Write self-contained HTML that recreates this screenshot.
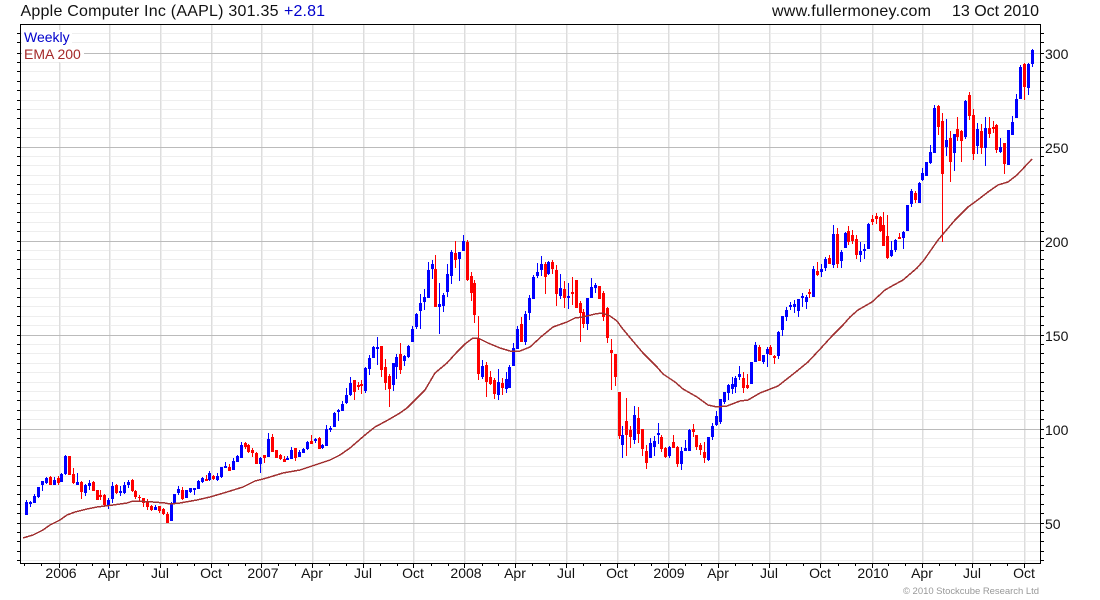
<!DOCTYPE html>
<html><head><meta charset="utf-8"><title>AAPL</title>
<style>html,body{margin:0;padding:0;background:#fff}svg{display:block}text{font-family:"Liberation Sans",Arial,sans-serif}</style></head>
<body>
<svg width="1100" height="600" viewBox="0 0 1100 600" xmlns="http://www.w3.org/2000/svg">
<rect width="1100" height="600" fill="#fff"/>
<!-- minor grid -->
<path shape-rendering="crispEdges" fill="none" stroke="#eeeeee" d="M20 33.5H1040M20 42.5H1040M20 62.5H1040M20 71.5H1040M20 81.5H1040M20 90.5H1040M20 100.5H1040M20 109.5H1040M20 118.5H1040M20 128.5H1040M20 137.5H1040M20 156.5H1040M20 165.5H1040M20 175.5H1040M20 184.5H1040M20 194.5H1040M20 203.5H1040M20 212.5H1040M20 222.5H1040M20 231.5H1040M20 250.5H1040M20 259.5H1040M20 269.5H1040M20 278.5H1040M20 288.5H1040M20 297.5H1040M20 306.5H1040M20 316.5H1040M20 325.5H1040M20 344.5H1040M20 353.5H1040M20 363.5H1040M20 372.5H1040M20 382.5H1040M20 391.5H1040M20 400.5H1040M20 410.5H1040M20 419.5H1040M20 438.5H1040M20 447.5H1040M20 457.5H1040M20 466.5H1040M20 476.5H1040M20 485.5H1040M20 494.5H1040M20 504.5H1040M20 513.5H1040M20 532.5H1040M20 541.5H1040M20 551.5H1040M20 560.5H1040"/>
<!-- vertical grid, lighter companion pixel -->
<path shape-rendering="crispEdges" fill="none" stroke="#eeeeee" d="M60.5 24V563M110.5 24V563M161.5 24V563M212.5 24V563M262.5 24V563M313.5 24V563M364.5 24V563M414.5 24V563M465.5 24V563M516.5 24V563M567.5 24V563M618.5 24V563M669.5 24V563M719.5 24V563M770.5 24V563M821.5 24V563M873.5 24V563M923.5 24V563M973.5 24V563M1025.5 24V563"/>
<!-- vertical grid -->
<path shape-rendering="crispEdges" fill="none" stroke="#dddddd" d="M59.5 24V563M109.5 24V563M160.5 24V563M211.5 24V563M261.5 24V563M312.5 24V563M363.5 24V563M413.5 24V563M464.5 24V563M515.5 24V563M566.5 24V563M617.5 24V563M668.5 24V563M718.5 24V563M769.5 24V563M820.5 24V563M872.5 24V563M922.5 24V563M972.5 24V563M1024.5 24V563"/>
<!-- major grid -->
<path shape-rendering="crispEdges" fill="none" stroke="#bbbbbb" d="M20 53.5H1040M20 147.5H1040M20 241.5H1040M20 335.5H1040M20 429.5H1040M20 523.5H1040"/>
<!-- legend backgrounds -->
<rect x="22" y="30" width="50" height="16" fill="#fff"/>
<rect x="22" y="46" width="62" height="16" fill="#fff"/>
<g shape-rendering="crispEdges" fill="none">
<!-- blue wicks -->
<path stroke="#0000ff" stroke-width="1" d="M26.5 500V515M30.5 501V507M34.5 494V503M38.5 487V498M42.5 481V491M46.5 477V484M54.5 477V485M61.5 473V482M65.5 455V475M77.5 473V485M85.5 484V496M89.5 480V490M108.5 498V509M112.5 482V503M120.5 486V496M124.5 482V494M128.5 480V488M155.5 505V510M171.5 502V521M174.5 494V503M178.5 486V495M186.5 490V498M190.5 488V493M194.5 488V495M198.5 480V489M202.5 477V483M209.5 471V481M217.5 473V481M221.5 467V478M225.5 462V468M233.5 458V470M237.5 455V462M241.5 442V458M260.5 457V473M268.5 433V457M287.5 456V460M291.5 447V459M299.5 450V457M303.5 448V453M307.5 441V450M315.5 438V443M322.5 444V449M326.5 425V446M330.5 426V432M334.5 412V427M338.5 409V421M342.5 401V411M346.5 388V404M350.5 377V396M365.5 367V393M369.5 355V375M373.5 346V358M377.5 337V365M393.5 363V391M396.5 354V379M404.5 355V366M408.5 345V358M412.5 326V342M416.5 313V329M420.5 294V329M424.5 289V310M428.5 262V298M432.5 260V279M439.5 283V334M443.5 293V312M447.5 264V297M451.5 250V284M459.5 252V281M463.5 235V251M482.5 360V379M498.5 369V400M506.5 372V393M509.5 365V388M513.5 343V366M517.5 326V349M525.5 311V345M529.5 295V320M533.5 275V299M537.5 263V278M541.5 256V276M548.5 261V275M560.5 274V299M568.5 283V309M587.5 298V330M591.5 278V298M595.5 283V293M622.5 426V458M634.5 406V444M650.5 438V458M654.5 436V456M658.5 423V444M669.5 446V458M681.5 447V470M685.5 440V451M689.5 429V451M708.5 437V461M712.5 423V440M716.5 411V426M720.5 399V424M724.5 392V404M728.5 384V400M732.5 377V394M735.5 376V393M739.5 366V380M751.5 362V384M755.5 342V362M763.5 355V364M767.5 347V367M778.5 331V359M782.5 316V336M786.5 307V321M790.5 302V310M794.5 300V313M798.5 299V317M802.5 293V307M806.5 295V309M813.5 266V297M821.5 264V277M825.5 257V271M833.5 225V268M841.5 250V268M845.5 232V248M860.5 242V262M864.5 244V259M868.5 223V249M891.5 241V257M895.5 239V252M903.5 231V249M907.5 205V231M911.5 189V207M919.5 182V203M922.5 168V181M926.5 162V176M930.5 145V164M934.5 105V153M946.5 119V156M954.5 134V171M965.5 100V139M977.5 123V154M985.5 117V166M1000.5 138V153M1008.5 130V165M1012.5 116V135M1016.5 94V118M1020.5 65V99M1028.5 63V95M1032.5 49V67"/>
<!-- red wicks -->
<path stroke="#ff0000" stroke-width="1" d="M50.5 476V485M58.5 476V485M69.5 456V475M73.5 468V484M81.5 481V499M93.5 481V491M97.5 490V500M100.5 490V500M104.5 494V506M116.5 484V494M132.5 479V492M135.5 490V499M139.5 495V501M143.5 498V507M147.5 499V510M151.5 505V511M159.5 506V513M163.5 508V515M167.5 512V523M182.5 487V500M206.5 475V481M213.5 475V480M229.5 464V471M245.5 442V449M248.5 444V453M252.5 448V457M256.5 452V464M264.5 455V463M272.5 434V452M276.5 450V458M280.5 454V460M284.5 456V462M295.5 448V461M311.5 435V444M319.5 437V449M354.5 380V400M358.5 382V390M361.5 380V394M381.5 346V377M385.5 359V390M389.5 374V407M400.5 343V374M435.5 255V307M455.5 241V268M467.5 240V281M471.5 272V301M474.5 280V323M478.5 316V380M486.5 362V397M490.5 371V385M494.5 378V399M502.5 378V395M521.5 317V342M545.5 262V294M552.5 260V274M556.5 265V306M564.5 281V308M572.5 277V305M576.5 280V308M580.5 301V342M583.5 309V328M599.5 286V299M603.5 291V321M607.5 307V343M611.5 339V390M615.5 354V386M619.5 392V439M626.5 398V456M630.5 426V448M638.5 407V443M642.5 429V456M646.5 445V469M661.5 435V452M665.5 447V458M673.5 435V448M677.5 446V467M693.5 424V437M696.5 435V450M700.5 443V455M704.5 442V463M743.5 372V393M747.5 374V389M759.5 345V361M770.5 345V355M774.5 355V364M809.5 289V298M817.5 262V276M829.5 255V264M837.5 228V268M848.5 226V245M852.5 230V244M856.5 235V259M872.5 215V225M876.5 213V224M880.5 216V232M883.5 212V246M887.5 215V259M899.5 233V239M915.5 191V203M938.5 105V135M942.5 113V242M950.5 131V182M957.5 117V141M961.5 130V162M969.5 92V120M973.5 109V160M981.5 124V154M989.5 117V138M993.5 121V133M996.5 124V153M1004.5 143V174M1024.5 63V100"/>
<!-- blue bodies -->
<path stroke="#0000ff" stroke-width="3" d="M26.5 502V515M30.5 502V504M34.5 496V503M38.5 487V497M42.5 481V485M46.5 478V483M54.5 480V485M61.5 474V482M65.5 456V474M77.5 482V485M85.5 485V493M89.5 483V486M108.5 500V505M112.5 486V499M120.5 491V493M124.5 485V493M128.5 482V485M155.5 507V510M171.5 504V521M174.5 494V503M178.5 489V493M186.5 490V498M190.5 488V492M194.5 488V490M198.5 481V489M202.5 478V482M209.5 473V480M217.5 476V480M221.5 467V477M225.5 466V468M233.5 461V470M237.5 456V462M241.5 445V458M260.5 458V464M268.5 439V457M287.5 458V460M291.5 450V459M299.5 452V457M303.5 449V453M307.5 442V449M315.5 439V441M322.5 445V448M326.5 429V446M330.5 428V430M334.5 413V427M338.5 410V412M342.5 404V411M346.5 395V403M350.5 383V395M365.5 368V391M369.5 358V369M373.5 347V358M377.5 347V349M393.5 363V385M396.5 357V367M404.5 356V361M408.5 346V357M412.5 329V342M416.5 314V327M420.5 303V311M424.5 297V302M428.5 270V298M432.5 264V269M439.5 304V307M443.5 295V306M447.5 274V292M451.5 252V276M459.5 252V259M463.5 241V251M482.5 366V377M498.5 382V395M506.5 379V389M509.5 367V388M513.5 348V366M517.5 329V349M525.5 314V342M529.5 298V313M533.5 277V299M537.5 272V276M541.5 264V270M548.5 262V274M560.5 288V296M568.5 296V298M587.5 298V324M591.5 287V298M595.5 285V288M622.5 435V445M634.5 415V440M650.5 443V458M654.5 441V447M658.5 433V435M669.5 447V456M681.5 451V464M685.5 448V451M689.5 430V451M708.5 437V460M712.5 426V437M716.5 416V425M720.5 399V422M724.5 392V402M728.5 385V393M732.5 384V389M735.5 378V387M739.5 374V377M751.5 362V384M755.5 345V362M763.5 355V362M767.5 349V354M778.5 332V356M782.5 316V330M786.5 310V317M790.5 305V307M794.5 304V307M798.5 299V311M802.5 296V298M806.5 297V302M813.5 269V297M821.5 269V272M825.5 259V268M833.5 234V265M841.5 252V261M845.5 233V248M860.5 251V255M864.5 249V251M868.5 224V249M891.5 250V256M895.5 240V250M903.5 232V238M907.5 205V231M911.5 191V204M919.5 183V203M922.5 173V180M926.5 162V176M930.5 152V163M934.5 108V153M946.5 140V147M954.5 134V153M965.5 101V137M977.5 129V146M985.5 128V148M1000.5 147V152M1008.5 130V165M1012.5 122V135M1016.5 99V118M1020.5 67V99M1028.5 64V88M1032.5 50V64"/>
<!-- red bodies -->
<path stroke="#ff0000" stroke-width="3" d="M50.5 477V485M58.5 478V483M69.5 456V475M73.5 474V483M81.5 482V492M93.5 482V491M97.5 490V500M100.5 495V497M104.5 495V505M116.5 485V493M132.5 480V491M135.5 491V497M139.5 497V498M143.5 498V503M147.5 502V507M151.5 506V510M159.5 506V511M163.5 509V514M167.5 514V523M182.5 490V499M206.5 479V481M213.5 476V479M229.5 467V471M245.5 443V447M248.5 445V452M252.5 450V453M256.5 453V464M264.5 455V458M272.5 437V452M276.5 450V458M280.5 455V459M284.5 459V462M295.5 448V458M311.5 441V444M319.5 438V449M354.5 380V392M358.5 385V387M361.5 384V386M381.5 346V370M385.5 367V383M389.5 376V389M400.5 354V370M435.5 269V307M455.5 253V260M467.5 242V280M471.5 276V293M474.5 283V315M478.5 338V374M486.5 365V382M490.5 377V384M494.5 380V394M502.5 383V388M521.5 324V342M545.5 264V277M552.5 262V269M556.5 270V294M564.5 289V298M572.5 292V294M576.5 280V308M580.5 303V313M583.5 312V324M599.5 286V299M603.5 293V317M607.5 308V338M611.5 350V353M615.5 354V377M619.5 392V436M626.5 421V435M630.5 430V437M638.5 418V434M642.5 429V449M646.5 451V463M661.5 437V449M665.5 448V457M673.5 442V448M677.5 447V464M693.5 429V432M696.5 435V447M700.5 445V450M704.5 452V458M743.5 378V388M747.5 385V388M759.5 347V361M770.5 347V355M774.5 356V358M809.5 292V294M817.5 271V275M829.5 258V264M837.5 234V264M848.5 231V242M852.5 235V241M856.5 239V255M872.5 219V222M876.5 216V219M880.5 217V231M883.5 225V246M887.5 236V258M899.5 237V239M915.5 193V200M938.5 106V127M942.5 121V174M950.5 138V162M957.5 129V137M961.5 131V141M969.5 95V116M973.5 115V154M981.5 131V148M989.5 128V134M993.5 127V129M996.5 125V150M1004.5 143V164M1024.5 64V87"/>
</g>
<!-- EMA 200 -->
<polyline fill="none" shape-rendering="crispEdges" stroke="#a03030" stroke-width="1.5" stroke-linejoin="round" points="23,538 33,535 43,530 50,525 60,520 67,515 75,512 87,509 97,507 113,505 127,503 133,501 153,502 165,503 170,504 180,503 197,500 210,497 227,492 243,487 255,481 263,479 270,477 283,473 300,470 315,465 330,460 340,455 350,448 365,435 375,427 388,420 400,413 407,408 415,400 425,390 435,373 447,363 457,352 465,344 473,338 478,338 488,343 500,348 510,351 520,351 530,347 542,336 553,327 567,322 575,318 583,317 595,314 602,313 610,316 617,321 622,328 632,340 643,353 657,367 663,374 675,382 683,389 697,397 708,405 717,407 727,406 740,401 748,400 760,393 778,386 797,371 808,362 822,347 832,336 843,325 850,317 858,310 872,302 885,290 892,286 903,280 917,268 924,260 938,240 955,220 968,207 975,202 988,192 998,185 1008,182 1017,175 1032,159"/>
<!-- frame and ticks -->
<g shape-rendering="crispEdges" fill="none" stroke="#000">
<rect x="20.5" y="24.5" width="1020" height="539"/>
<path d="M17 33.5H20M17 42.5H20M17 53.5H20M17 62.5H20M17 71.5H20M17 81.5H20M17 90.5H20M17 100.5H20M17 109.5H20M17 118.5H20M17 128.5H20M17 137.5H20M17 147.5H20M17 156.5H20M17 165.5H20M17 175.5H20M17 184.5H20M17 194.5H20M17 203.5H20M17 212.5H20M17 222.5H20M17 231.5H20M17 241.5H20M17 250.5H20M17 259.5H20M17 269.5H20M17 278.5H20M17 288.5H20M17 297.5H20M17 306.5H20M17 316.5H20M17 325.5H20M17 335.5H20M17 344.5H20M17 353.5H20M17 363.5H20M17 372.5H20M17 382.5H20M17 391.5H20M17 400.5H20M17 410.5H20M17 419.5H20M17 429.5H20M17 438.5H20M17 447.5H20M17 457.5H20M17 466.5H20M17 476.5H20M17 485.5H20M17 494.5H20M17 504.5H20M17 513.5H20M17 523.5H20M17 532.5H20M17 541.5H20M17 551.5H20M17 560.5H20"/>
<path d="M1041 33.5H1044M1041 42.5H1044M1041 53.5H1044M1041 62.5H1044M1041 71.5H1044M1041 81.5H1044M1041 90.5H1044M1041 100.5H1044M1041 109.5H1044M1041 118.5H1044M1041 128.5H1044M1041 137.5H1044M1041 147.5H1044M1041 156.5H1044M1041 165.5H1044M1041 175.5H1044M1041 184.5H1044M1041 194.5H1044M1041 203.5H1044M1041 212.5H1044M1041 222.5H1044M1041 231.5H1044M1041 241.5H1044M1041 250.5H1044M1041 259.5H1044M1041 269.5H1044M1041 278.5H1044M1041 288.5H1044M1041 297.5H1044M1041 306.5H1044M1041 316.5H1044M1041 325.5H1044M1041 335.5H1044M1041 344.5H1044M1041 353.5H1044M1041 363.5H1044M1041 372.5H1044M1041 382.5H1044M1041 391.5H1044M1041 400.5H1044M1041 410.5H1044M1041 419.5H1044M1041 429.5H1044M1041 438.5H1044M1041 447.5H1044M1041 457.5H1044M1041 466.5H1044M1041 476.5H1044M1041 485.5H1044M1041 494.5H1044M1041 504.5H1044M1041 513.5H1044M1041 523.5H1044M1041 532.5H1044M1041 541.5H1044M1041 551.5H1044M1041 560.5H1044"/>
<path d="M24.5 564V566M41.5 564V566M76.5 564V566M92.5 564V566M126.5 564V566M143.5 564V566M177.5 564V566M194.5 564V566M228.5 564V566M245.5 564V566M278.5 564V566M295.5 564V566M329.5 564V566M346.5 564V566M380.5 564V566M397.5 564V566M431.5 564V566M448.5 564V566M482.5 564V566M498.5 564V566M532.5 564V566M549.5 564V566M583.5 564V566M600.5 564V566M634.5 564V566M651.5 564V566M685.5 564V566M701.5 564V566M735.5 564V566M752.5 564V566M786.5 564V566M803.5 564V566M838.5 564V566M855.5 564V566M888.5 564V566M905.5 564V566M939.5 564V566M955.5 564V566M990.5 564V566M1007.5 564V566"/>
<path d="M59.5 564V568M109.5 564V568M160.5 564V568M211.5 564V568M261.5 564V568M312.5 564V568M363.5 564V568M413.5 564V568M464.5 564V568M515.5 564V568M566.5 564V568M617.5 564V568M668.5 564V568M718.5 564V568M769.5 564V568M820.5 564V568M872.5 564V568M922.5 564V568M972.5 564V568M1024.5 564V568"/>
</g>
<!-- header text -->
<text x="20.5" y="16" font-size="16" fill="#111" textLength="258">Apple Computer Inc (AAPL) 301.35</text>
<text x="284" y="16" font-size="16" fill="#0000cc" textLength="41">+2.81</text>
<text x="772" y="16" font-size="16" fill="#111" textLength="159">www.fullermoney.com</text>
<text x="952" y="16" font-size="16" fill="#111" textLength="87">13 Oct 2010</text>
<text x="24" y="42" font-size="14" fill="#0000cc">Weekly</text>
<text x="24" y="59" font-size="14" fill="#a52a2a">EMA 200</text>
<!-- y labels -->
<g font-size="14" fill="#111">
<text x="1045" y="59">300</text>
<text x="1045" y="153">250</text>
<text x="1045" y="247">200</text>
<text x="1045" y="341">150</text>
<text x="1045" y="435">100</text>
<text x="1045" y="529">50</text>
</g>
<!-- x labels -->
<g font-size="14" fill="#111" text-anchor="middle">
<text x="61" y="578">2006</text>
<text x="109" y="578">Apr</text>
<text x="160" y="578">Jul</text>
<text x="211" y="578">Oct</text>
<text x="263" y="578">2007</text>
<text x="312" y="578">Apr</text>
<text x="363" y="578">Jul</text>
<text x="413" y="578">Oct</text>
<text x="466" y="578">2008</text>
<text x="515" y="578">Apr</text>
<text x="566" y="578">Jul</text>
<text x="617" y="578">Oct</text>
<text x="669" y="578">2009</text>
<text x="718" y="578">Apr</text>
<text x="769" y="578">Jul</text>
<text x="820" y="578">Oct</text>
<text x="873" y="578">2010</text>
<text x="922" y="578">Apr</text>
<text x="972" y="578">Jul</text>
<text x="1024" y="578">Oct</text>
</g>
<text x="903" y="594" font-size="9.5" fill="#999" textLength="136">© 2010 Stockcube Research Ltd</text>
</svg>
</body></html>
